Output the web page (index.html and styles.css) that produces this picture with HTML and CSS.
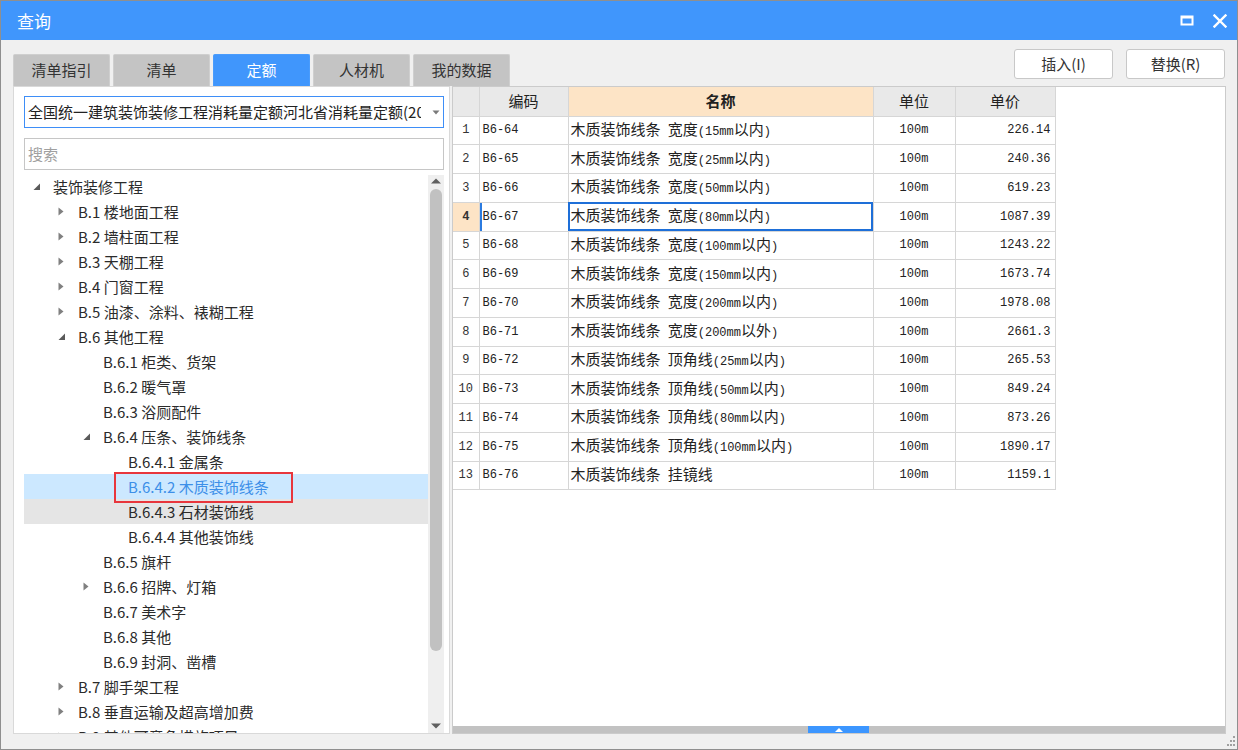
FILE: index.html
```html
<!DOCTYPE html>
<html lang="zh-CN">
<head>
<meta charset="utf-8">
<title>查询</title>
<link rel="stylesheet" href="styles.css">
</head>
<body>
<div class="window">
  <div class="titlebar">
    <span class="title">查询</span>
    <div class="wctl">
      <svg class="wbtn" width="14" height="14" viewBox="0 0 14 14"><rect x="1.5" y="2.5" width="11" height="8" fill="none" stroke="#fff" stroke-width="2"/><rect x="1" y="2" width="12" height="2.5" fill="#fff"/></svg>
      <svg class="wbtn" width="14" height="14" viewBox="0 0 14 14"><path d="M1.5 1.5 L12.5 12.5 M12.5 1.5 L1.5 12.5" stroke="#fff" stroke-width="2.4" stroke-linecap="square"/></svg>
    </div>
  </div>

  <div class="toolbar">
    <div class="tabs">
      <div class="tab">清单指引</div>
      <div class="tab">清单</div>
      <div class="tab active">定额</div>
      <div class="tab">人材机</div>
      <div class="tab">我的数据</div>
    </div>
    <div class="actions">
      <button class="btn">插入(I)</button>
      <button class="btn">替换(R)</button>
    </div>
  </div>

  <div class="main">
    <div class="left">
      <div class="select">
        <span class="select-text">全国统一建筑装饰装修工程消耗量定额河北省消耗量定额(2012)</span>
        <svg class="select-arrow" width="8" height="5" viewBox="0 0 8 5"><path d="M0.5 0.5 H7.5 L4 4.5 Z" fill="#7a7a7a"/></svg>
      </div>
      <div class="search">搜索</div>
      <div class="tree-wrap">
        <div class="tree">
          <div class="row l0"><span class="tg"><svg width="8" height="8" viewBox="0 0 8 8"><path d="M7 0.5 V7 H0.5 Z" fill="#5a5a5a"/></svg></span><span class="lb">装饰装修工程</span></div>
          <div class="row l1"><span class="tg"><svg width="6" height="9" viewBox="0 0 6 9"><path d="M0.5 0.5 L5.5 4.5 L0.5 8.5 Z" fill="#808080"/></svg></span><span class="lb">B.1 楼地面工程</span></div>
          <div class="row l1"><span class="tg"><svg width="6" height="9" viewBox="0 0 6 9"><path d="M0.5 0.5 L5.5 4.5 L0.5 8.5 Z" fill="#808080"/></svg></span><span class="lb">B.2 墙柱面工程</span></div>
          <div class="row l1"><span class="tg"><svg width="6" height="9" viewBox="0 0 6 9"><path d="M0.5 0.5 L5.5 4.5 L0.5 8.5 Z" fill="#808080"/></svg></span><span class="lb">B.3 天棚工程</span></div>
          <div class="row l1"><span class="tg"><svg width="6" height="9" viewBox="0 0 6 9"><path d="M0.5 0.5 L5.5 4.5 L0.5 8.5 Z" fill="#808080"/></svg></span><span class="lb">B.4 门窗工程</span></div>
          <div class="row l1"><span class="tg"><svg width="6" height="9" viewBox="0 0 6 9"><path d="M0.5 0.5 L5.5 4.5 L0.5 8.5 Z" fill="#808080"/></svg></span><span class="lb">B.5 油漆、涂料、裱糊工程</span></div>
          <div class="row l1"><span class="tg"><svg width="8" height="8" viewBox="0 0 8 8"><path d="M7 0.5 V7 H0.5 Z" fill="#5a5a5a"/></svg></span><span class="lb">B.6 其他工程</span></div>
          <div class="row l2"><span class="tg"></span><span class="lb">B.6.1 柜类、货架</span></div>
          <div class="row l2"><span class="tg"></span><span class="lb">B.6.2 暖气罩</span></div>
          <div class="row l2"><span class="tg"></span><span class="lb">B.6.3 浴厕配件</span></div>
          <div class="row l2"><span class="tg"><svg width="8" height="8" viewBox="0 0 8 8"><path d="M7 0.5 V7 H0.5 Z" fill="#5a5a5a"/></svg></span><span class="lb">B.6.4 压条、装饰线条</span></div>
          <div class="row l3"><span class="tg"></span><span class="lb">B.6.4.1 金属条</span></div>
          <div class="row l3 selected"><span class="tg"></span><span class="lb marked">B.6.4.2 木质装饰线条</span></div>
          <div class="row l3 hover"><span class="tg"></span><span class="lb">B.6.4.3 石材装饰线</span></div>
          <div class="row l3"><span class="tg"></span><span class="lb">B.6.4.4 其他装饰线</span></div>
          <div class="row l2"><span class="tg"></span><span class="lb">B.6.5 旗杆</span></div>
          <div class="row l2"><span class="tg"><svg width="6" height="9" viewBox="0 0 6 9"><path d="M0.5 0.5 L5.5 4.5 L0.5 8.5 Z" fill="#808080"/></svg></span><span class="lb">B.6.6 招牌、灯箱</span></div>
          <div class="row l2"><span class="tg"></span><span class="lb">B.6.7 美术字</span></div>
          <div class="row l2"><span class="tg"></span><span class="lb">B.6.8 其他</span></div>
          <div class="row l2"><span class="tg"></span><span class="lb">B.6.9 封洞、凿槽</span></div>
          <div class="row l1"><span class="tg"><svg width="6" height="9" viewBox="0 0 6 9"><path d="M0.5 0.5 L5.5 4.5 L0.5 8.5 Z" fill="#808080"/></svg></span><span class="lb">B.7 脚手架工程</span></div>
          <div class="row l1"><span class="tg"><svg width="6" height="9" viewBox="0 0 6 9"><path d="M0.5 0.5 L5.5 4.5 L0.5 8.5 Z" fill="#808080"/></svg></span><span class="lb">B.8 垂直运输及超高增加费</span></div>
          <div class="row l1"><span class="tg"><svg width="6" height="9" viewBox="0 0 6 9"><path d="M0.5 0.5 L5.5 4.5 L0.5 8.5 Z" fill="#808080"/></svg></span><span class="lb">B.9 其他可竞争措施项目</span></div>
        </div>
        <div class="vscroll">
          <svg class="varrow" width="10" height="6" viewBox="0 0 10 6"><path d="M0 5.5 L5 0.5 L10 5.5 Z" fill="#606060"/></svg>
          <div class="vthumb"></div>
          <div class="vspace"></div>
          <svg class="varrow" width="10" height="6" viewBox="0 0 10 6"><path d="M0 0.5 L10 0.5 L5 5.5 Z" fill="#606060"/></svg>
        </div>
      </div>
    </div>

    <div class="right">
      <div class="grid-area">
        <table class="grid">
          <colgroup><col class="c-no"><col class="c-code"><col class="c-name"><col class="c-unit"><col class="c-price"></colgroup>
          <thead>
            <tr><th class="no"></th><th>编码</th><th class="name">名称</th><th>单位</th><th>单价</th></tr>
          </thead>
          <tbody>
            <tr><td class="no">1</td><td class="code">B6-64</td><td class="nm">木质装饰线条<span class="a"> </span>宽度<span class="a">(15mm</span>以内<span class="a">)</span></td><td class="unit">100m</td><td class="price">226.14</td></tr>
            <tr><td class="no">2</td><td class="code">B6-65</td><td class="nm">木质装饰线条<span class="a"> </span>宽度<span class="a">(25mm</span>以内<span class="a">)</span></td><td class="unit">100m</td><td class="price">240.36</td></tr>
            <tr><td class="no">3</td><td class="code">B6-66</td><td class="nm">木质装饰线条<span class="a"> </span>宽度<span class="a">(50mm</span>以内<span class="a">)</span></td><td class="unit">100m</td><td class="price">619.23</td></tr>
            <tr class="cur"><td class="no">4</td><td class="code">B6-67</td><td class="nm focus">木质装饰线条<span class="a"> </span>宽度<span class="a">(80mm</span>以内<span class="a">)</span></td><td class="unit">100m</td><td class="price">1087.39</td></tr>
            <tr><td class="no">5</td><td class="code">B6-68</td><td class="nm">木质装饰线条<span class="a"> </span>宽度<span class="a">(100mm</span>以内<span class="a">)</span></td><td class="unit">100m</td><td class="price">1243.22</td></tr>
            <tr><td class="no">6</td><td class="code">B6-69</td><td class="nm">木质装饰线条<span class="a"> </span>宽度<span class="a">(150mm</span>以内<span class="a">)</span></td><td class="unit">100m</td><td class="price">1673.74</td></tr>
            <tr><td class="no">7</td><td class="code">B6-70</td><td class="nm">木质装饰线条<span class="a"> </span>宽度<span class="a">(200mm</span>以内<span class="a">)</span></td><td class="unit">100m</td><td class="price">1978.08</td></tr>
            <tr><td class="no">8</td><td class="code">B6-71</td><td class="nm">木质装饰线条<span class="a"> </span>宽度<span class="a">(200mm</span>以外<span class="a">)</span></td><td class="unit">100m</td><td class="price">2661.3</td></tr>
            <tr><td class="no">9</td><td class="code">B6-72</td><td class="nm">木质装饰线条<span class="a"> </span>顶角线<span class="a">(25mm</span>以内<span class="a">)</span></td><td class="unit">100m</td><td class="price">265.53</td></tr>
            <tr><td class="no">10</td><td class="code">B6-73</td><td class="nm">木质装饰线条<span class="a"> </span>顶角线<span class="a">(50mm</span>以内<span class="a">)</span></td><td class="unit">100m</td><td class="price">849.24</td></tr>
            <tr><td class="no">11</td><td class="code">B6-74</td><td class="nm">木质装饰线条<span class="a"> </span>顶角线<span class="a">(80mm</span>以内<span class="a">)</span></td><td class="unit">100m</td><td class="price">873.26</td></tr>
            <tr><td class="no">12</td><td class="code">B6-75</td><td class="nm">木质装饰线条<span class="a"> </span>顶角线<span class="a">(100mm</span>以内<span class="a">)</span></td><td class="unit">100m</td><td class="price">1890.17</td></tr>
            <tr><td class="no">13</td><td class="code">B6-76</td><td class="nm">木质装饰线条<span class="a"> </span>挂镜线</td><td class="unit">100m</td><td class="price">1159.1</td></tr>
          </tbody>
        </table>
      </div>
      <div class="hscroll">
        <div class="hthumb" style="margin-left:355px"><svg width="8" height="4" viewBox="0 0 8 4"><path d="M0 4 L4 0 L8 4 Z" fill="#fff"/></svg></div>
      </div>
    </div>
  </div>

  <div class="statusbar">
    <svg class="grip" width="12" height="12" viewBox="0 0 12 12"><g fill="#a0a0a0"><rect x="9" y="0" width="2" height="2"/><rect x="6" y="4" width="2" height="2"/><rect x="9" y="4" width="2" height="2"/><rect x="3" y="8" width="2" height="2"/><rect x="6" y="8" width="2" height="2"/><rect x="9" y="8" width="2" height="2"/></g></svg>
  </div>
</div>
</body>
</html>
```
FILE: styles.css
```css
* { box-sizing: border-box; }
html, body { margin: 0; padding: 0; }
body {
  width: 1238px;
  height: 750px;
  overflow: hidden;
  font-family: "Noto Sans CJK SC", "Noto Sans", sans-serif;
  font-size: 15px;
  color: #2b2b2b;
  background: #f0f0f0;
}

.window {
  width: 1238px;
  height: 750px;
  border: 1px solid #8f8f8f;
  display: flex;
  flex-direction: column;
  background: #f0f0f0;
}

/* title bar */
.titlebar {
  height: 39px;
  flex: none;
  background: #4096fc;
  display: flex;
  align-items: center;
  padding: 0 10px 0 16px;
  color: #fff;
}
.title { font-size: 17px; line-height: 20px; }
.wctl { margin-left: auto; display: flex; align-items: center; gap: 19px; padding-top: 1px; }
.wbtn { display: block; }

/* toolbar */
.toolbar {
  height: 46px;
  flex: none;
  display: flex;
  padding: 0 12px;
}
.tabs { display: flex; align-self: flex-end; gap: 3px; }
.tab {
  width: 97px;
  height: 32px;
  background: #c4c4c4;
  border: 1px solid #cfcfcf;
  border-bottom: none;
  border-radius: 2px 2px 0 0;
  display: flex;
  align-items: center;
  justify-content: center;
  line-height: 20px;
  color: #333;
  padding-bottom: 1px;
}
.tab.active { background: #4096fc; border-color: #4a9cfc; color: #fff; }
.actions { margin-left: auto; display: flex; gap: 13px; padding-top: 9px; }
.btn {
  width: 99px;
  height: 30px;
  background: #fff;
  border: 1px solid #c8c8c8;
  border-radius: 3px;
  font-family: inherit;
  font-size: 15px;
  color: #333;
  line-height: 20px;
  padding: 0;
}

/* main */
.main {
  flex: 1;
  min-height: 0;
  display: flex;
  gap: 2px;
  padding: 0 11px 0 12px;
}
.left {
  width: 437px;
  flex: none;
  background: #fff;
  border: 1px solid #d9d9d9;
  padding: 9px 5px 0 10px;
  display: flex;
  flex-direction: column;
}
.select {
  height: 32px;
  flex: none;
  border: 1px solid #3e8ef7;
  display: flex;
  align-items: center;
  padding-left: 3px;
}
.select-text {
  width: 393px;
  white-space: nowrap;
  overflow: hidden;
  line-height: 20px;
  color: #222;
}
.select-arrow { margin-left: 11px; }
.search {
  height: 32px;
  flex: none;
  margin-top: 10px;
  border: 1px solid #c6c6c6;
  display: flex;
  align-items: center;
  padding-left: 3px;
  color: #a0a0a0;
  line-height: 20px;
}
.tree-wrap {
  flex: 1;
  min-height: 0;
  margin-top: 5px;
  display: flex;
  overflow: hidden;
}
.tree { flex: 1; min-width: 0; margin-top: -1px; }
.row {
  height: 25px;
  display: flex;
  align-items: center;
  white-space: nowrap;
  color: #2b2b2b;
}
.row.l0 { padding-left: 8px; }
.row.l1 { padding-left: 33px; }
.row.l2 { padding-left: 58px; }
.row.l3 { padding-left: 83px; }
.tg {
  width: 21px;
  flex: none;
  display: flex;
  align-items: center;
  padding-left: 1px;
}
.tg svg { display: block; }
.lb { line-height: 20px; }
.row.selected { background: #cce8ff; color: #3d8fe8; }
.row.hover { background: #e5e5e5; }
.marked { position: relative; }
.marked::after {
  content: "";
  position: absolute;
  left: -14px;
  right: -24px;
  top: -5px;
  bottom: -6px;
  border: 2px solid #e8363c;
}

.vscroll {
  width: 16px;
  flex: none;
  background: #efefef;
  display: flex;
  flex-direction: column;
  align-items: center;
  padding: 2px 0 4px;
}
.varrow { display: block; flex: none; margin-top: 1px; }
.vthumb {
  width: 12px;
  height: 462px;
  flex: none;
  margin-top: 5px;
  background: #c1c1c1;
  border-radius: 6px;
}
.vspace { flex: 1; }

/* right grid */
.right {
  flex: 1;
  min-width: 0;
  background: #fff;
  border: 1px solid #cbcbcb;
  display: flex;
  flex-direction: column;
}
.grid-area { flex: 1; min-height: 0; overflow: hidden; }
.grid {
  border-collapse: collapse;
  table-layout: fixed;
  width: 602px;
}
.c-no { width: 26px; }
.c-code { width: 89px; }
.c-name { width: 305px; }
.c-unit { width: 82px; }
.c-price { width: 100px; }
.grid th, .grid td {
  border: 1px solid #d6d6d6;
  padding: 0;
  white-space: nowrap;
  overflow: hidden;
}
.grid th {
  height: 29px;
  background: #e9e9e9;
  font-weight: normal;
  font-size: 15px;
  line-height: 20px;
  color: #222;
  border-top: none;
}
.grid th.name { background: #fde4c6; font-weight: bold; }
.grid tr > :first-child { border-left: none; }
.grid td {
  height: 28.75px;
  font-family: "Liberation Mono", "Noto Sans CJK SC", monospace;
  font-size: 12px;
  color: #222;
  line-height: 20px;
}
.grid td.no { text-align: center; color: #333; }
.grid td.code { padding-left: 3px; }
.grid td.nm {
  padding-left: 2px;
  font-family: "Noto Sans CJK SC", sans-serif;
  font-size: 15px;
}
.grid td.nm .a { font-family: "Liberation Mono", monospace; font-size: 12px; }
.grid td.unit { text-align: center; }
.grid td.price { text-align: right; padding-right: 4px; }
.grid tr.cur td.no { background: #fde4c6; font-weight: bold; }
.grid tr.cur td.code { box-shadow: inset 2px 0 0 #2b7be0; }
.grid td.focus { outline: 2px solid #1e6fd8; outline-offset: -2px; }

.hscroll {
  height: 7px;
  flex: none;
  background: #c2c2c2;
  display: flex;
}
.hthumb {
  width: 61px;
  height: 7px;
  background: #3c96ff;
  display: flex;
  align-items: center;
  justify-content: center;
}
.hthumb svg { display: block; }

/* bottom */
.statusbar {
  height: 15px;
  flex: none;
  display: flex;
  justify-content: flex-end;
  align-items: flex-end;
  padding: 0 1px 1px 0;
}
.grip { display: block; }
```
